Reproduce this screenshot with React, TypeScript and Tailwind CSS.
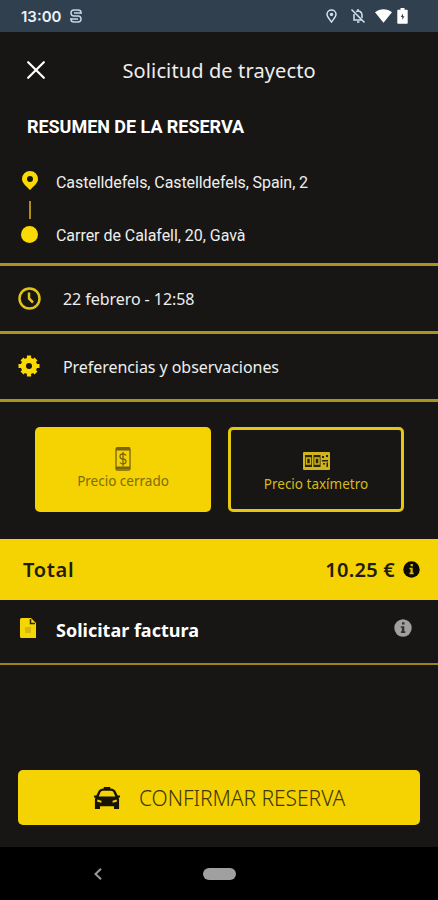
import React from "react";

const noto = "font-['Noto_Sans','Open_Sans',sans-serif]";
const roboto = "font-['Roboto',sans-serif]";

function StatusBar() {
  return (
    <div className="flex h-8 shrink-0 items-center bg-[#31404e] pl-[21px] pr-[30px] text-[#e9f1fa]">
      <span className="w-[41px] whitespace-nowrap font-['Inter',sans-serif] text-[15px] font-semibold leading-none">13:00</span>
      <svg className="ml-2 h-[14px] w-3" viewBox="0 0 12 14" fill="none" stroke="#c4d4e6" strokeWidth="1.5">
        <path d="M11 5V3.500Q11 1 8 1H4Q1 1 1 4t3 3h4q3 0 3 3t-3 3H4Q1 13 1 10.500V9M4 4h7M1 10h7" />
      </svg>
      <div className="ml-auto flex items-center">
        <svg className="h-[14px] w-[11px]" viewBox="0 0 11 14" fill="none" stroke="#d4e0ed" strokeWidth="1.5">
          <path d="M5.500 13C3.600 10.400 1 7.700 1 5.300a4.500 4.300 0 0 1 9 0C10 7.700 7.400 10.400 5.500 13Z" />
          <circle cx="5.500" cy="5.400" r="1.700" fill="#d4e0ed" stroke="none" />
        </svg>
        <svg className="ml-[13px] h-4 w-4" viewBox="0 0 16 16" fill="none" stroke="#d4e0ed" strokeWidth="1.500">
          <path d="M6 3.600C9 1.800 12 4 12 7v3M4 6v6h8.500M1.500 1.500l13 13" />
          <path d="M8 1v2M7 14h2.500" />
        </svg>
        <svg className="ml-[9px] h-[14px] w-[17px]" viewBox="0 0 17 14" fill="#fff">
          <path d="M0 3.200C4.800-.8 12.200-.8 17 3.200L8.500 13.700Z" />
        </svg>
        <svg className="ml-[5px] h-4 w-[11px]" viewBox="0 0 11 16">
          <path d="M3.500 0h4v1.800H10q.700 0 .700.700V15q0 .700-.700.700H1q-.700 0-.700-.700V2.500q0-.700.700-.700h2.500Z" fill="#fff" />
          <path d="M6 5.500L3.800 9h1.500v2.800l2.200-3.600H6Z" fill="#31404e" />
        </svg>
      </div>
    </div>
  );
}

function Info({ className, dot }: { className: string; dot: string }) {
  return (
    <svg className={className} viewBox="0 0 18 18">
      <circle cx="9" cy="9" r="8.700" fill="currentColor" />
      <path d="M8 3.300h2.500v2.300H8ZM6.800 7.200h3.500v5h1V14H6.900v-1.800h1V8.800H6.800Z" fill={dot} />
    </svg>
  );
}

export default function App() {
  return (
    <div className={`flex h-[900px] w-[438px] flex-col overflow-hidden bg-[#171614] text-[#eeeeee] ${noto}`}>
      <StatusBar />
      <header className="flex h-[76px] shrink-0 items-center pl-[27px]">
        <svg className="h-[18px] w-[18px]" viewBox="0 0 18 18" stroke="#fff" strokeWidth="2.200" strokeLinecap="round">
          <path d="M1.200 1.200l15.600 15.600M16.800 1.200L1.200 16.800" />
        </svg>
        <h1 className="ml-[77.500px] mt-[2px] whitespace-nowrap text-[20px] leading-7 tracking-[0.120px]">Solicitud de trayecto</h1>
      </header>

      <section className={`h-[155px] shrink-0 pl-5 ${roboto}`}>
        <h2 className="ml-[7px] mt-[7px] whitespace-nowrap text-[18px] font-bold leading-6 tracking-[-0.040px] text-white">RESUMEN DE LA RESERVA</h2>
        <div className="mt-[27px] flex gap-[17px]">
          <div className="flex w-[19px] flex-col items-center pt-[5px]">
            <svg className="h-[19px] w-4" viewBox="0 0 16 19">
              <path fillRule="evenodd" d="M8 0a8 8 0 0 1 8 8c0 4-4.500 7.500-8 11C4.500 15.500 0 12 0 8a8 8 0 0 1 8-8ZM8 5a3 3 0 1 0 0 6a3 3 0 0 0 0-6Z" fill="#fada04" />
            </svg>
            <div className="mt-[11px] h-[18px] w-0.5 bg-[#b08d13]" />
            <div className="mt-[7px] h-[17px] w-[17px] rounded-full bg-[#fada04]" />
          </div>
          <div className="whitespace-nowrap text-[16px] leading-6">
            <p className="mt-[5px] tracking-[-0.080px]">Castelldefels, Castelldefels, Spain, 2</p>
            <p className="mt-[29px] tracking-[-0.040px]">Carrer de Calafell, 20, Gavà</p>
          </div>
        </div>
      </section>

      <div className="flex h-[68px] shrink-0 items-center border-t-[3px] border-[#ab9320] pl-[18px] text-[16px]">
        <svg className="h-6 w-6" viewBox="0 0 24 24" fill="none" stroke="#ddc31c" strokeWidth="2.500">
          <circle cx="11.500" cy="11.500" r="10" />
          <path d="M11 5.500v6l4 4" />
        </svg>
        <span className="ml-[21px] whitespace-nowrap tracking-[-0.060px]">22 febrero - 12:58</span>
      </div>
      <div className="flex h-[68px] shrink-0 items-center border-t-[3px] border-[#ab9320] pl-[18px] text-[16px]">
        <svg className="mb-px h-[22px] w-[22px]" viewBox="0 0 22 22">
          <g stroke="#fada04" strokeWidth="4.200" strokeLinejoin="round">
            <path d="M11 .500v21M.500 11h21M4 4l14 14M18 4L4 18" />
          </g>
          <circle cx="11" cy="11" r="8.200" fill="#fada04" />
          <circle cx="11" cy="11" r="3" fill="#171614" />
        </svg>
        <span className="ml-[23px] whitespace-nowrap tracking-[-0.060px]">Preferencias y observaciones</span>
      </div>

      <div className="h-[140px] shrink-0 border-t-[3px] border-[#ab9320] pl-[35px] pt-[25px]">
        <div className="flex gap-[17px] text-[13.500px]">
          <button className="flex h-[85px] w-44 flex-col items-center rounded-[5px] bg-[#f5d202] pt-5 text-[#806d0a]">
            <svg className="h-6 w-4" viewBox="0 0 16 24" fill="none" stroke="#786609">
              <rect x="1" y=".700" width="14" height="22.500" rx="1.500" strokeWidth="1.300" />
              <path d="M1 2h14M1 21h14" strokeWidth="3" />
              <path d="M11 8.500Q10 7 8 7q-3 0-3 2.400T8 12t3 2.600T8 17q-2 0-3-1.500M8 5v14" strokeWidth="1.300" />
            </svg>
            <span className="whitespace-nowrap leading-5">Precio cerrado</span>
          </button>
          <button className="flex h-[85px] w-44 flex-col items-center rounded-[5px] border-[3px] border-[#e5c711] pt-[22px] text-[#d5bb17]">
            <svg className="h-[18px] w-[27px]" viewBox="0 0 27 18">
              <rect width="27" height="18" rx="1" fill="#d0b51a" />
              <path d="M2 3h7v12H2ZM10.500 3h7v12h-7Z" fill="#29230f" />
              <path d="M3.500 6h4v6h-4ZM12 6h4v6h-4Z" fill="none" stroke="#d0b51a" strokeWidth="1.500" />
              <path d="M5 8.500h1v1H5ZM13.500 8.500h1v1h-1ZM19 8h6v1.500h-6ZM19 4h2v2h-2ZM23 3h2v2h-2ZM20 11h2v1.500h-2ZM23.500 10.500H25V15h-1.500Z" fill="#29230f" />
            </svg>
            <span className="mt-[4px] whitespace-nowrap leading-5">Precio taxímetro</span>
          </button>
        </div>
      </div>

      <div className="flex h-[61px] shrink-0 items-center bg-[#f5d202] pb-px pl-[23px] pr-[18px] text-[20px] font-semibold text-[#211d09]">
        <span className="mt-[2px] tracking-[0.700px]">Total</span>
        <span className="ml-auto mt-[2px] whitespace-nowrap tracking-[0.250px]">10.25 €</span>
        <Info className="ml-2 h-[17px] w-[17px] text-[#0c0b05]" dot="#d8bb08" />
      </div>

      <div className="flex h-[65px] shrink-0 items-center border-b-2 border-[#9b821d] pl-5 pr-[26px]">
        <svg className="mb-[8px] h-5 w-4" viewBox="0 0 16 20">
          <path d="M1.500 0H11l5 5v15H1.500Q0 20 0 18.500v-17Q0 0 1.500 0Z" fill="#f5d504" />
          <path d="M10.500 1v4.500H15" fill="none" stroke="#302a0a" strokeWidth="1.500" />
          <path d="M5 10h6M5 12h6M5 14h6" stroke="#b89d12" strokeWidth="1" />
        </svg>
        <span className="mb-[3px] ml-5 whitespace-nowrap text-[18px] font-bold text-white">Solicitar factura</span>
        <Info className="mb-[7px] ml-auto h-[18px] w-[18px] text-[#a0a0a0]" dot="#33312f" />
      </div>

      <div className="mt-auto px-[18px] pb-[22px]">
        <button className="flex h-[55px] w-[402px] items-center rounded-[5px] bg-[#f5d202] pl-[76px] text-[#40370b]">
          <svg className="h-[22px] w-[26px]" viewBox="0 0 28 23" preserveAspectRatio="none" fill="#171406">
            <path fillRule="evenodd" d="M10.500 0h7v1.500q5 .400 6 3.500l2 4H28v2h-1.500l.500 2v10h-5.500v-3h-15v3H1V13l.500-2H0V9h2.500l2-4q1-3.100 6-3.500ZM7 5.500L5 10h18l-2-4.500Q20 4 18 4h-8Q8 4 7 5.500ZM3.500 13v2.500l4.500 1v-2ZM24.500 13L20 14.500v2l4.500-1Z" />
          </svg>
          <span className="ml-[19px] mt-[2px] whitespace-nowrap text-[21px] font-light tracking-[-0.050px]">CONFIRMAR RESERVA</span>
        </button>
      </div>

      <nav className="flex h-[53px] shrink-0 items-center bg-black pl-[94px]">
        <svg className="h-3 w-2" viewBox="0 0 8 12" fill="none" stroke="#999" strokeWidth="2">
          <path d="M7 .800L1.500 6L7 11.200" />
        </svg>
        <div className="ml-[101px] h-3 w-[33px] rounded-full bg-[#a0a0a0]" />
      </nav>
    </div>
  );
}
